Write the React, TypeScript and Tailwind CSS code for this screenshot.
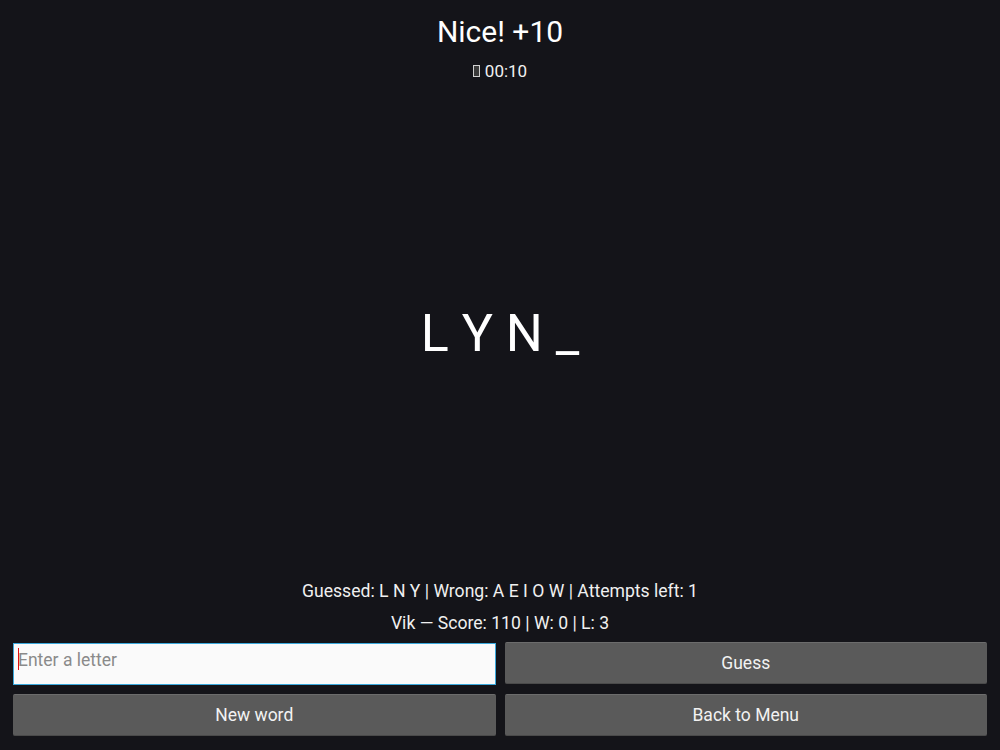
import { useState } from "react";

const FONT = { fontFamily: "Roboto, 'Liberation Sans', sans-serif" };

function GameButton({ label }: { label: string }) {
  return (
    <button
      type="button"
      className="h-[42px] w-full rounded-[2px] border-t border-b border-t-[#6c6c6c] border-b-[#4a4a4a] bg-[#5a5a5a] pt-[1px] text-[17.5px] text-[#f2f2f2]"
    >
      {label}
    </button>
  );
}

export default function App() {
  const [letter, setLetter] = useState("");

  return (
    <div style={FONT} className="flex h-[750px] w-[1000px] flex-col bg-[#141419] text-white">
      {/* header */}
      <div className="flex flex-col items-center pt-[14px]">
        <h1 className="text-[30px] leading-[36px] text-white">Nice! +10</h1>
        <div className="mt-[11px] flex items-center gap-[5px] text-[17px] leading-[20px] text-[#f0f0f0]">
          <span className="inline-block h-[12px] w-[7px] border border-[#d0d0d0] bg-[#3a3a3a]" />
          <span>00:10</span>
        </div>
      </div>

      {/* word */}
      <div className="flex flex-1 items-center justify-center pt-[6px]">
        <div className="text-[52px] leading-[60px] text-white">L Y N _</div>
      </div>

      {/* status + controls */}
      <div className="flex flex-col items-center pb-[14px]">
        <p className="text-[17.6px] leading-[20px] text-[#f0f0f0]">
          Guessed: L N Y | Wrong: A E I O W | Attempts left: 1
        </p>
        <p className="mt-[12px] text-[17.6px] leading-[20px] text-[#f0f0f0]">
          Vik — Score: 110 | W: 0 | L: 3
        </p>
        <div className="mt-[9px] grid w-full grid-cols-2 gap-x-[9px] gap-y-[10px] px-[13px]">
          <div className="relative h-[42px]">
            <input
              value={letter}
              onChange={(e) => setLetter(e.target.value)}
              placeholder="Enter a letter"
              className="mt-[1px] h-[42px] w-full border border-[#3ba9dc] bg-[#fafafa] px-[4px] pb-[12px] pt-[4px] text-[17.5px] text-[#222] outline-none placeholder:text-[#8a8a8a]"
            />
            <span className="absolute left-[5px] top-[6px] h-[22px] w-[1px] bg-[#e01010]" />
          </div>
          <GameButton label="Guess" />
          <GameButton label="New word" />
          <GameButton label="Back to Menu" />
        </div>
      </div>
    </div>
  );
}
